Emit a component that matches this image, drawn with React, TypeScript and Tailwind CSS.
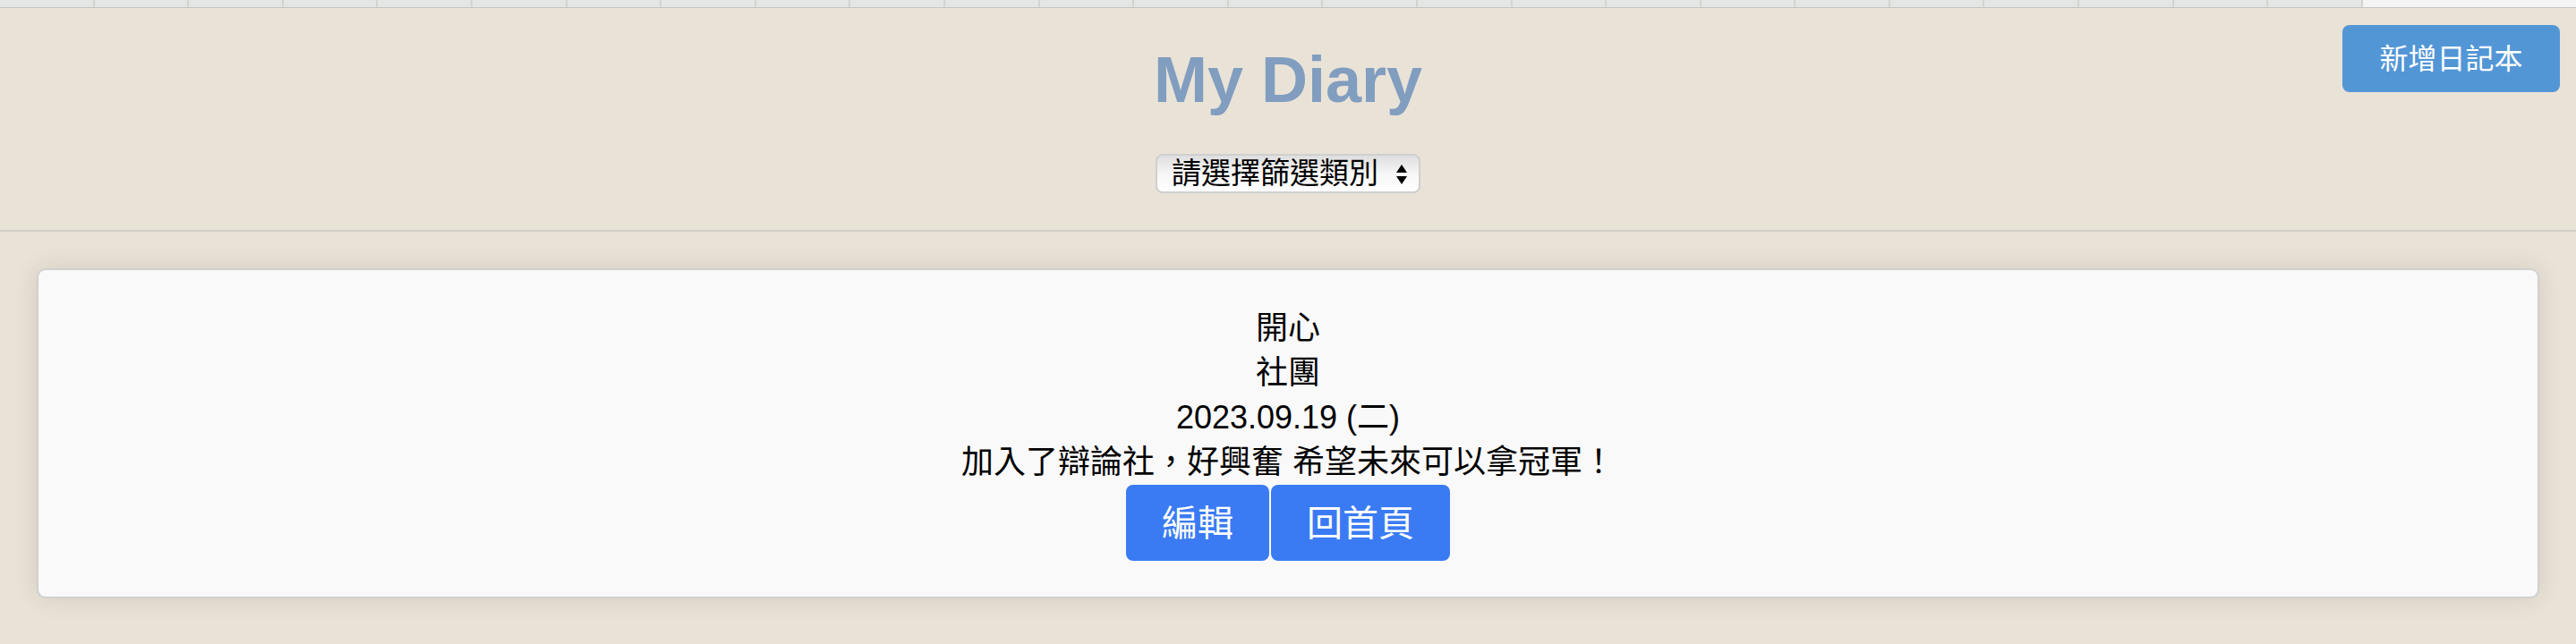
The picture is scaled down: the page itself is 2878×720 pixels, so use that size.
import React from "react";

const cells = Array.from({ length: 25 }, (_, i) => i);

export default function App() {
  return (
    <div
      className="min-h-[720px] w-full bg-[#e9e2d7] text-black"
      style={{ fontFamily: '"Liberation Sans", Arial, "Noto Sans CJK TC", sans-serif' }}
    >
      {/* top strip */}
      <div className="flex h-[9px] border-b-[1px] border-[#c6c4bd]">
        {cells.map((i) => (
          <div key={i} className="h-full w-[105.6px] shrink-0 border-r-2 border-[#d3d4d2] bg-[#e4e6e5]" />
        ))}
        <div className="h-full flex-1 bg-[#f3f4f3]" />
      </div>

      {/* header */}
      <header className="relative flex flex-col items-center border-b-2 border-[#d2cec7] pt-[39px] pb-[41px]">
        <h1 className="text-[72px] font-bold leading-[83px] text-[#819dbf]">My Diary</h1>
        <div className="relative mt-[41px] h-[44px] w-[296px]">
          <select
            className="h-full w-full appearance-none rounded-[8px] border-2 border-[#cfcfcf] bg-gradient-to-b from-[#dedede] via-[#f6f6f6] to-white pl-[16px] text-[33px] leading-[40px] text-black outline-none"
            defaultValue=""
          >
            <option value="">請選擇篩選類別</option>
          </select>
          <svg
            className="pointer-events-none absolute right-[14px] top-[11px]"
            width="14"
            height="24"
            viewBox="0 0 14 24"
          >
            <polygon points="7,1 13,10 1,10" fill="#000" />
            <polygon points="1,14 13,14 7,23" fill="#000" />
          </svg>
        </div>
        <button className="absolute right-[18px] top-[19px] flex h-[75px] w-[243px] items-center justify-center rounded-[8px] bg-[#5296d6] text-[32px] text-white">
          新增日記本
        </button>
      </header>

      {/* card */}
      <main className="px-[41px] pt-[41px] pb-[52px]">
        <div className="flex flex-col items-center rounded-[10px] border-2 border-[#d0d0d0] bg-[#f9f9f9] pt-[40px] pb-[40px] shadow-[0_0_26px_rgba(90,70,40,0.14)]">
          <div className="text-[36px] leading-[50px]">開心</div>
          <div className="text-[36px] leading-[50px]">社團</div>
          <div className="text-[36px] leading-[50px]">2023.09.19 (二)</div>
          <div className="text-[36px] leading-[50px]">加入了辯論社，好興奮 希望未來可以拿冠軍！</div>
          <div className="flex gap-[2px]">
            <button className="flex h-[85px] items-center rounded-[8px] bg-[#3a7bf3] px-[40px] text-[40px] text-white">
              編輯
            </button>
            <button className="flex h-[85px] items-center rounded-[8px] bg-[#3a7bf3] px-[40px] text-[40px] text-white">
              回首頁
            </button>
          </div>
        </div>
      </main>
    </div>
  );
}
